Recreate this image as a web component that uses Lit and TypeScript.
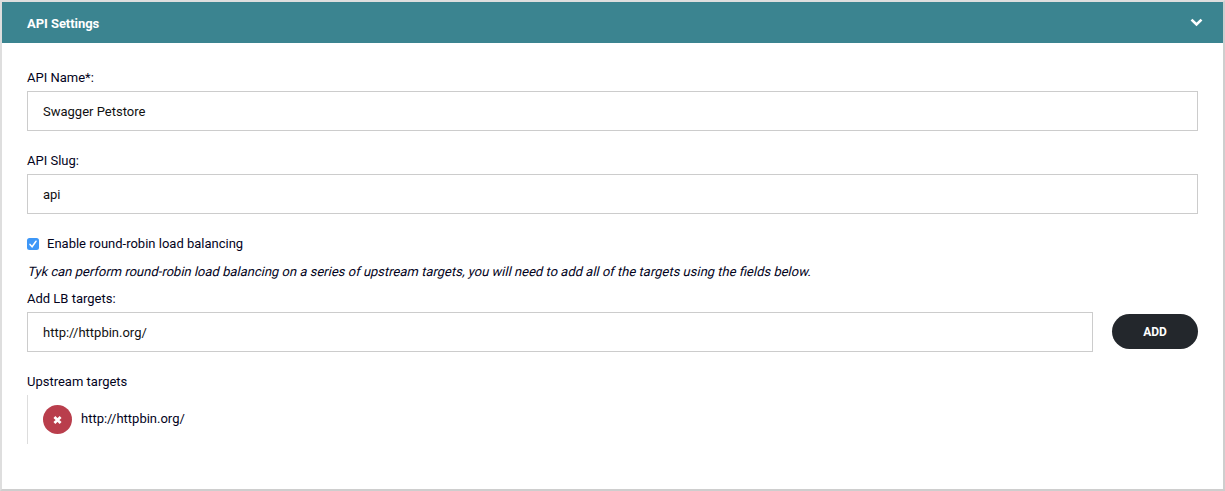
import { LitElement, html, css } from "lit";
import { customElement, property, state } from "lit/decorators.js";

@customElement("text-field")
class TextField extends LitElement {
  @property() label = "";
  @property() value = "";

  static styles = css`
    :host { display: block; }
    .label { display: block; height: 20px; line-height: 20px; margin-bottom: 3px; color: #03031c; }
    .input {
      display: block; box-sizing: border-box; width: 100%; height: 40px; margin: 0;
      padding: 0 15px; border: 1px solid #ccc; border-radius: 0; outline: none;
      background: #fff; color: #111; font: inherit;
    }
  `;

  render() {
    return html`<label class="label" for="field">${this.label}</label>
      <input class="input" id="field" type="text" .value=${this.value} />`;
  }
}

@customElement("app-root")
class AppRoot extends LitElement {
  @state() targets = ["http://httpbin.org/"];

  static styles = css`
    :host {
      display: block; box-sizing: border-box; height: 491px;
      border: 2px solid #dedede; border-right-color: #cecece; border-bottom-color: #cecece;
      font: 13px/20px Roboto, "Liberation Sans", sans-serif; color: #03031c;
    }
    .panel { height: 487px; background: #fff; }
    .header {
      display: flex; align-items: center; justify-content: space-between;
      box-sizing: border-box; height: 41px; padding: 0 20px 0 25px;
      background: #3b8490; color: #fff; font-weight: 700;
    }
    .title { height: 20px; margin-top: 3px; letter-spacing: -0.05px; }
    .chevron { display: block; width: 13px; height: 9px; }
    .body { padding: 25px 25px 0; }
    .slug { margin-top: 20px; }
    .toggle { display: flex; align-items: center; height: 20px; margin-top: 20px; }
    .box { display: block; width: 12px; height: 12px; margin-right: 8px; }
    .help { height: 20px; margin: 8px 0 7px; white-space: nowrap; transform: skewX(-13deg); transform-origin: 0 15px; }
    .row { display: flex; align-items: flex-end; gap: 19px; }
    .grow { flex: 1; }
    .add {
      box-sizing: border-box; width: 86px; height: 35px; margin: 0 0 3px; padding: 1px 0 0; border: 0; border-radius: 18px;
      background: #23272c; color: #fff; font: 700 12px/34px Roboto, "Liberation Sans", sans-serif;
    }
    .subtitle { margin-top: 20px; height: 20px; }
    .targets { margin: 3px 0 0; padding: 0; list-style: none; border-left: 1px solid #ddd; }
    .target { display: flex; align-items: center; height: 49px; padding-left: 15px; }
    .remove { width: 29px; height: 29px; margin: 0 9px 0 0; padding: 0; border: 0; border-radius: 50%; background: #b93e4c; }
    .cross { display: block; width: 29px; height: 29px; }
    .url { height: 20px; margin-bottom: 2px; }
  `;

  render() {
    return html`
      <section class="panel">
        <header class="header">
          <span class="title">API Settings</span>
          <svg class="chevron" viewBox="0 0 13 9"><path d="M1.5 1.6 L6.5 6.5 L11.5 1.6" fill="none" stroke="#fff" stroke-width="2.6"/></svg>
        </header>
        <div class="body">
          <text-field label="API Name*:" value="Swagger Petstore"></text-field>
          <text-field class="slug" label="API Slug:" value="api"></text-field>
          <div class="toggle">
            <svg class="box" viewBox="0 0 12 12" role="checkbox" aria-checked="true">
              <rect width="12" height="12" rx="2.5" fill="#3e97f7"/>
              <path d="M3 6.4 L5.1 8.7 L9 3.2" fill="none" stroke="#fff" stroke-width="1.5" stroke-linecap="round"/>
            </svg>
            <span>Enable round-robin load balancing</span>
          </div>
          <p class="help">Tyk can perform round-robin load balancing on a series of upstream targets, you will need to add all of the targets using the fields below.</p>
          <div class="row">
            <text-field class="grow" label="Add LB targets:" value="http://httpbin.org/"></text-field>
            <button class="add">ADD</button>
          </div>
          <div class="subtitle">Upstream targets</div>
          <ul class="targets">
            ${this.targets.map((t) => html`<li class="target">
              <button class="remove" aria-label="Remove">
                <svg class="cross" viewBox="0 0 29 29"><path d="M11.4 12 L17.6 18 M17.6 12 L11.4 18" stroke="#fff" stroke-width="2.7"/></svg>
              </button>
              <span class="url">${t}</span>
            </li>`)}
          </ul>
        </div>
      </section>`;
  }
}
